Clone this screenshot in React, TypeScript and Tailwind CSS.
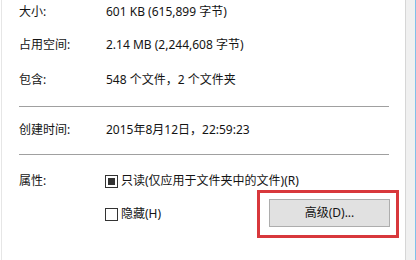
import React from "react";

const font = { fontFamily: '"Noto Sans", "Noto Sans CJK SC", sans-serif' };

function Row({ label, value, top }: { label: string; value: React.ReactNode; top: string }) {
  return (
    <div className={`flex h-[20px] items-center ${top}`}>
      <div className="w-[87px] shrink-0">{label}</div>
      <div>{value}</div>
    </div>
  );
}

export default function App() {
  return (
    <div
      className="flex h-[260px] w-[416px] overflow-hidden bg-white text-[12px] leading-[20px] text-[#141414]"
      style={font}
    >
      <div className="w-[1px] shrink-0" />
      <div className="w-[1px] shrink-0 bg-[#e6e6e6]" />
      <div className="flex flex-1 flex-col pl-[17px]">
        <Row label="大小:" value="601 KB (615,899 字节)" top="mt-[2px]" />
        <Row label="占用空间:" value="2.14 MB (2,244,608 字节)" top="mt-[13px]" />
        <Row label="包含:" value="548 个文件，2 个文件夹" top="mt-[15px]" />
        <div className="mt-[16px] h-[1px] w-[370px] bg-[#a0a0a0]" />
        <Row label="创建时间:" value="2015年8月12日，22:59:23" top="mt-[13px]" />
        <div className="mt-[14px] h-[1px] w-[370px] bg-[#a0a0a0]" />
        <div className="mt-[16px] flex h-[20px] items-center">
          <div className="w-[86px] shrink-0">属性:</div>
          <div className="flex items-center">
            <div className="flex h-[13px] w-[13px] items-center justify-center border border-[#333]">
              <div className="h-[7px] w-[7px] bg-[#333]" />
            </div>
            <span className="ml-[3px]">只读(仅应用于文件夹中的文件)(R)</span>
          </div>
        </div>
        <div className="mt-[-1px] flex items-center">
          <div className="w-[86px] shrink-0" />
          <div className="mt-[14px] flex h-[20px] w-[152px] shrink-0 items-center self-start">
            <div className="h-[13px] w-[13px] border border-[#333]" />
            <span className="ml-[3px]">隐藏(H)</span>
          </div>
          <div className="border-[3px] border-[#d8383c] pb-[8px] pl-[9px] pr-[6px] pt-[6px]">
            <button className="flex h-[28px] w-[121px] items-center justify-center border border-[#adadad] bg-[#e1e1e1] text-[12px] text-[#141414]" style={font}>
              高级(D)...
            </button>
          </div>
        </div>
      </div>
      <div className="flex h-full w-[11px] shrink-0">
        <div className="w-[1px] bg-[#d6d6d6]" />
        <div className="flex-1 bg-[#f0f0f0]" />
        <div className="w-[1px] bg-[#7fc1ea]" />
      </div>
    </div>
  );
}
